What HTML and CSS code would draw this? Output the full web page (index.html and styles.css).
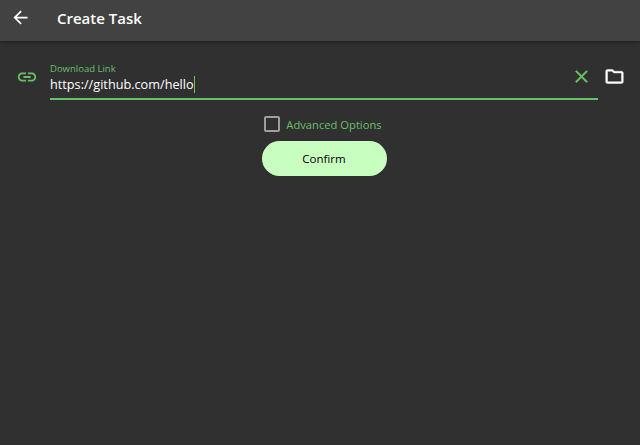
FILE: index.html
```html
<!DOCTYPE html>
<html>

<head>
    <meta charset="UTF-8">
    <title>Create Task</title>
    <link rel="stylesheet" href="styles.css">
</head>

<body>
    <header class="appbar">
        <svg class="back" width="21" height="21" viewBox="0 0 24 24">
            <path d="M20 11H7.83l5.59-5.59L12 4l-8 8 8 8 1.41-1.41L7.83 13H20v-2z" />
        </svg>
        <h1>Create Task</h1>
    </header>

    <main class="content">
        <div class="link-row">
            <svg class="link-icon" width="22" height="22" viewBox="0 0 24 24">
                <path d="M3.9 12c0-1.71 1.39-3.1 3.1-3.1h4V7H7c-2.76 0-5 2.24-5 5s2.24 5 5 5h4v-1.9H7c-1.71 0-3.1-1.39-3.1-3.1zM8 13h8v-2H8v2zm9-6h-4v1.9h4c1.71 0 3.1 1.39 3.1 3.1s-1.39 3.1-3.1 3.1h-4V17h4c2.76 0 5-2.24 5-5s-2.24-5-5-5z" />
            </svg>
            <div class="field">
                <div class="field-text">
                    <label>Download Link</label>
                    <div class="value">https://github.com/hello<span class="caret"></span></div>
                </div>
                <svg class="clear" width="21" height="21" viewBox="0 0 24 24">
                    <path d="M19 6.41L17.59 5 12 10.59 6.41 5 5 6.41 10.59 12 5 17.59 6.41 19 12 13.41 17.59 19 19 17.59 13.41 12z" />
                </svg>
            </div>
            <svg class="folder" width="21" height="21" viewBox="0 0 24 24">
                <path d="M9.17 6l2 2H20v10H4V6h5.17M10 4H4c-1.1 0-1.99.9-1.99 2L2 18c0 1.1.9 2 2 2h16c1.1 0 2-.9 2-2V8c0-1.1-.9-2-2-2h-8l-2-2z" />
            </svg>
        </div>

        <div class="options">
            <span class="checkbox"></span>
            <span class="options-label">Advanced Options</span>
        </div>
        <button class="confirm">Confirm</button>
    </main>
</body>

</html>
```

FILE: styles.css
```css
html,
body {
    height: 100%;
}

body {
    margin: 0;
    background-color: #303030;
    font-family: "Open Sans", "Noto Sans", sans-serif;
    overflow: hidden;
}

.appbar {
    display: flex;
    align-items: center;
    height: 41px;
    padding-bottom: 6px;
    box-sizing: border-box;
    background-color: #424242;
    box-shadow: 0 1px 4px rgba(0, 0, 0, 0.45);
}

.back {
    margin-left: 10px;
    fill: #fff;
}

.appbar h1 {
    margin: 0 0 0 26px;
    font-size: 15px;
    font-weight: 600;
    color: #fff;
}

.content {
    display: flex;
    flex-direction: column;
    align-items: center;
    padding-left: 8px;
}

.link-row {
    display: flex;
    align-self: stretch;
    align-items: flex-start;
    padding: 22px 9px 0 0;
}

.link-icon {
    flex: none;
    margin: 3px 12px 0 8px;
    fill: #6abf69;
}

.field {
    flex: 1;
    display: flex;
    align-items: flex-start;
    height: 35px;
    border-bottom: 2px solid #6abf69;
}

.field-text {
    flex: 1;
}

.field-text label {
    display: block;
    font-size: 9.5px;
    line-height: 12px;
    color: #6abf69;
}

.value {
    display: flex;
    align-items: center;
    font-size: 12.7px;
    line-height: 18px;
    color: #fff;
}

.caret {
    width: 1px;
    height: 17px;
    background-color: #6abf69;
}

.clear {
    flex: none;
    margin: 3px 6px 0 0;
    fill: #6abf69;
    stroke: #6abf69;
    stroke-width: 0.5;
}

.folder {
    flex: none;
    margin: 3px 6px 0 6px;
    fill: #fff;
    stroke: #fff;
    stroke-width: 0.5;
}

.options {
    display: flex;
    align-items: center;
    gap: 6px;
    margin: 16px 2px 0 0;
}

.checkbox {
    width: 12px;
    height: 12px;
    border: 2px solid #9e9e9e;
    border-radius: 2px;
}

.options-label {
    font-size: 11.2px;
    font-weight: 500;
    color: #6abf69;
}

.confirm {
    width: 125px;
    height: 35px;
    margin-top: 9px;
    border: none;
    border-radius: 18px;
    background-color: #c8ffc0;
    color: #000;
    font-family: "Open Sans", "Noto Sans", sans-serif;
    font-size: 11.5px;
    font-weight: 500;
}
```
